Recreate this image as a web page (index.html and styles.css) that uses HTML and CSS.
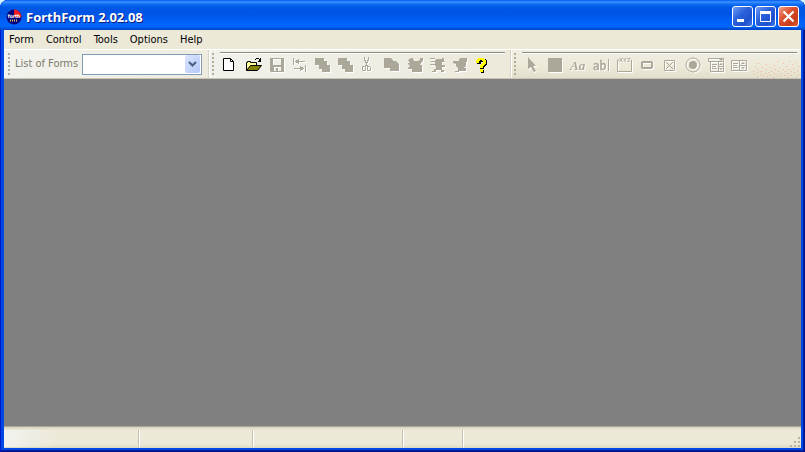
FILE: index.html
```
<!DOCTYPE html>
<html lang="en">
<head>
<meta charset="utf-8">
<title>ForthForm 2.02.08</title>
<link rel="stylesheet" href="styles.css">
</head>
<body>
<div class="window">
  <header class="titlebar">
    <svg class="logo" width="16" height="16" viewBox="0 0 16 16">
      <circle cx="8" cy="8" r="7.5" fill="#04047c"/>
      <path d="M8 8V0.5A7.5 7.5 0 0 1 15.5 8Z" fill="#f01c24"/>
      <text x="8" y="9" class="logo-text">forth</text>
      <path d="M4 11.5h8" stroke="#e8c860" stroke-width="2" stroke-dasharray="1 1"/>
    </svg>
    <h1>ForthForm 2.02.08</h1>
    <button class="caption" aria-label="Minimize"><svg width="19" height="19" viewBox="0 0 19 19"><path d="M4 12h7v3H4z" fill="#fff"/></svg></button>
    <button class="caption" aria-label="Maximize"><svg width="19" height="19" viewBox="0 0 19 19"><path fill-rule="evenodd" d="M4 4h11v11H4zM5 7v7h9V7z" fill="#fff"/></svg></button>
    <button class="caption close" aria-label="Close"><svg width="19" height="19" viewBox="0 0 19 19"><path d="M4.5 4.5l10 10M14.5 4.5l-10 10" stroke="#fff" stroke-width="2.2"/></svg></button>
  </header>
  <nav class="menu">
    <a href="#">Form</a><a href="#">Control</a><a href="#">Tools</a><a href="#">Options</a><a href="#">Help</a>
  </nav>
  <div class="rebar">
    <div class="band forms">
      <i class="grip"></i>
      <label for="forms">List of Forms</label>
      <div class="combo">
        <select id="forms"><option></option></select>
        <svg class="drop" width="15" height="18" viewBox="0 0 15 18"><path d="M4 7l3.5 3.5L11 7" fill="none" stroke="#4d6185" stroke-width="2.2"/></svg>
      </div>
    </div>
    <div class="band tools">
      <i class="grip"></i>
      <div class="buttons">
        <button aria-label="New"><svg viewBox="0 0 16 16"><path d="M.5 1.500h7l3 3v9H.5z" fill="#fff" stroke="#000"/><path d="M7.500 1.500v3h3" fill="none" stroke="#000"/></svg></button>
        <button aria-label="Open"><svg viewBox="0 0 16 16"><path d="M.5 13.500v-8h1v-1h3v1h6v3" fill="#ffff9c" stroke="#000"/><path d="M.5 13.500l4-5h11l-4 5z" fill="#848400" stroke="#000"/><path d="M9 2.500h1M10 1.500h3M13 2.500h1M14.500 1v4M12 4.500h3M13 3.500h2" fill="none" stroke="#000"/></svg></button>
        <button disabled aria-label="Save"><svg viewBox="0 0 16 16"><path fill-rule="evenodd" d="M1 1h14v14H2l-1-1zM4 2v6h8V2zM5 10v4h2v-3h2v3h3v-4z"/></svg></button>
        <button disabled aria-label="Swap"><svg viewBox="0 0 16 16"><path d="M1 1h1v7H1zM3 4h10v1H3zM4 3h2v3H4zM6 2h1v5H6zM13 8h1v7h-1zM2 11h10v1H2zM9 10h2v3H9zM8 9h1v5H8z"/></svg></button>
        <button disabled aria-label="Bring to front"><svg viewBox="0 0 16 16"><path d="M0 1h9v3h3v4h3v7H7v-3H4V8H0z"/></svg></button>
        <button disabled aria-label="Send to back"><svg viewBox="0 0 16 16"><path d="M0 1h9v3h3v4h3v7H7v-3H4V8H0z"/></svg></button>
        <button disabled aria-label="Cut"><svg viewBox="0 0 16 16"><path d="M3 0h1v4H3zM7 0h1v4H7zM4 3h1v3H4zM6 3h1v3H6zM5 5h1v4H5zM4 8h1v2H4zM6 8h1v2H6z"/><path d="M1.500 9.500h2l1 1v3h-3v-4M6.500 9.500h2l1 1v3h-3z" fill="none" stroke="#aca899"/></svg></button>
        <button disabled aria-label="Copy"><svg viewBox="0 0 16 16"><path d="M0 1h7l2 2v1h3l3 3v7H6v-3H0z"/></svg></button>
        <button disabled aria-label="Paste"><svg viewBox="0 0 16 16"><path d="M1 3l3-2h2l1 3h4l2-1V1h3v3l-2 2-1 2h2v7H5v-3H1v-1l2-2-2-2V6h2z"/></svg></button>
        <button disabled aria-label="Run form"><svg viewBox="0 0 16 16"><path d="M0 1h5v1H0zM6 2h6V1h2v3h1v1h-3v3h3v2h-3v3h2v2h-3v-2H6v2H2v-1h2v-2h2V9H5V8H0V7h5V5H1V4h4z"/></svg></button>
        <button disabled aria-label="Test form"><svg viewBox="0 0 16 16"><path d="M0 4h6V2l2-1h6v4h-1v4l-2 2h2v3H6v1H2v-1h3v-3L3 9V7L0 6z"/></svg></button>
        <button aria-label="Help"><svg viewBox="0 0 16 16"><path d="M1 7V3h1V2h2V1h4v1h2v1h1v5h-1v1H9v1H8v2H4V8h1V7h2V5H5v2z" fill="#000"/><path d="M0 6V3h1V2h1V1h6v1h1v1h1v4H9v1H8v1H7v2H4V8h1V7h1V6h1V4H6V3H4v1H3v2z" fill="#ffff00"/><path d="M5 13h3v3H5z"/><path d="M4 12h3v3H4z" fill="#ffff00"/></svg></button>
      </div>
    </div>
    <div class="band controls">
      <i class="grip"></i>
      <div class="buttons">
        <button disabled aria-label="Select"><svg viewBox="0 0 16 16"><path d="M3 0l8 9H8l3 5-2 1-3-5-3 2z"/></svg></button>
        <button disabled aria-label="Panel"><svg viewBox="0 0 16 16"><path d="M0 1h14v14H0z"/></svg></button>
        <button disabled aria-label="Label"><svg viewBox="0 0 16 16"><text x="-1" y="13" class="glyph-label">Aa</text></svg></button>
        <button disabled aria-label="Edit box"><svg viewBox="0 0 16 16"><text x="-1" y="13" class="glyph-edit">ab</text><path d="M14 2h1v12h-1z"/></svg></button>
        <button disabled aria-label="Group box"><svg viewBox="0 0 16 16"><path d="M2 3H.5v11.500h14V3H14" fill="none" stroke="#aca899"/><text x="2" y="5" class="glyph-group">XYZ</text></svg></button>
        <button disabled aria-label="Push button"><svg viewBox="0 0 16 16"><rect x="2" y="5" width="10" height="6" rx="1" fill="none" stroke="#aca899" stroke-width="2"/></svg></button>
        <button disabled aria-label="Check box"><svg viewBox="0 0 16 16"><path d="M1.500 3.500h10v10h-10zM3 5l7 7M10 5l-7 7" fill="none" stroke="#aca899"/></svg></button>
        <button disabled aria-label="Radio button"><svg viewBox="0 0 16 16"><circle cx="7" cy="8" r="7" fill="none" stroke="#aca899"/><circle cx="7" cy="8" r="4"/></svg></button>
        <button disabled aria-label="Combo box"><svg viewBox="0 0 16 16"><path d="M-.5 1.500h15v3h-15zM1.500 4.500h13v10h-13zM9.500 4.500v10M9.500 9.500h5M3 7.500h5M3 9.500h4M3 11.500h5" fill="none" stroke="#aca899"/><path d="M10 2h4l-2 2zM10 8h4l-2-2zM10 11h4l-2 2z"/></svg></button>
        <button disabled aria-label="List box"><svg viewBox="0 0 16 16"><path d="M-.5 3.500h15v10h-15zM7.500 3.500v10M7.500 8.500h7M1 6.500h5M1 8.500h4M1 10.500h5" fill="none" stroke="#aca899"/><path d="M9 7h4l-2-2zM9 10h4l-2 2z"/></svg></button>
      </div>
      <svg class="speckles" width="48" height="18" viewBox="0 0 48 18"><path fill="none" stroke="#f6b09c" d="M25 1.500h1M37 1.500h1M44 2.500h1M6 3.500h1M31 3.500h1M14 4.500h1M40 4.500h1M22 5.500h1M3 6.500h1M34 6.500h1M46 6.500h1M10 7.500h1M18 7.500h1M27 7.500h1M41 8.500h1M5 9.500h1M14 9.500h1M23 9.500h1M31 9.500h1M36 9.500h1M45 10.500h1M1 11.500h1M9 11.500h1M19 11.500h1M26 11.500h1M33 11.500h1M39 11.500h1M5 12.500h1M13 13.500h1M16 12.500h1M22 13.500h1M29 13.500h1M36 13.500h1M42 12.500h1M46 14.500h1M2 14.500h1M8 14.500h1M11 15.500h1M18 15.500h1M25 15.500h1M32 15.500h1M39 15.500h1M44 16.500h1M5 16.500h1M15 16.500h1M21 17.500h1M28 16.500h1M35 17.500h1"/></svg>
    </div>
  </div>
  <main class="workspace"></main>
  <footer class="status">
    <span></span><span></span><span></span><span></span><span></span>
    <svg class="resize" width="12" height="12" viewBox="0 0 12 12"><path d="M9 1h2v2H9zM5 5h2v2H5zM9 5h2v2H9zM1 9h2v2H1zM5 9h2v2H5zM9 9h2v2H9z" fill="#b8b4a2"/></svg>
  </footer>
</div>
</body>
</html>
```
FILE: styles.css
```
* { box-sizing: border-box; }

body {
  margin: 0;
  background: #d4f6fa;
  font: 11px/14px "DejaVu Sans Condensed", "Noto Sans", sans-serif;
  color: #000;
}

button { padding: 0; border: 0; background: none; font: inherit; }

.window {
  display: flex;
  flex-direction: column;
  min-height: 100vh;
  padding: 0 4px 4px;
  border-radius: 8px 8px 0 0;
  background: #0048e4;
  box-shadow: inset 1px 0 #0019cf, inset -1px -1px #00138c, inset -2px -2px #001ea0;
}

.titlebar {
  display: flex;
  align-items: center;
  gap: 2px;
  height: 30px;
  margin: 0 -4px;
  padding: 3px 6px 0;
  border-radius: 8px 8px 0 0;
  background: linear-gradient(#0058ee 0, #3c93ff 2px, #1070f8 4px, #0058e6 7px, #0054e3 14px, #0060f8 21px, #0066ff 26px, #0058e6 28px, #0040c0 30px);
}

.logo-text { font: bold 5px "DejaVu Sans Condensed", sans-serif; fill: #fff; text-anchor: middle; }

.titlebar h1 {
  flex: 1;
  margin: 0 0 0 2px;
  font: bold 13px/18px "Noto Sans", "Open Sans", sans-serif;
  color: #fff;
  text-shadow: 1px 1px #0a1883;
}

.caption {
  width: 21px;
  height: 21px;
  border: 1px solid #fff;
  border-radius: 3px;
  background: linear-gradient(135deg, #6f9cf4, #2c62dc 40%, #2050cc 75%, #3f7df0);
}
.caption svg { display: block; }
.close { background: linear-gradient(135deg, #f0a088, #dd5030 40%, #c83c18 75%, #e06038); }

.menu {
  display: flex;
  gap: 12px;
  height: 19px;
  padding: 3px 5px 0;
  background: #ece9d8;
}
.menu a { color: inherit; text-decoration: none; }

.rebar {
  display: flex;
  height: 30px;
  border-top: 1px solid #fff;
  border-bottom: 1px solid #c9c5b2;
  background: linear-gradient(#f0eee2, #ece9d8 60%, #e2dfcc);
}

.band {
  display: flex;
  align-items: center;
  padding-left: 4px;
  border-right: 1px solid #fff;
  box-shadow: inset -1px 0 #d8d4c2;
}
.forms { width: 206px; gap: 4px; background: linear-gradient(90deg, #f2f2ee, #eeecdf); }
.tools { width: 302px; background: linear-gradient(90deg, #f0f1eb, #edeadb); }
.controls { position: relative; flex: 1; border-right: 0; box-shadow: none; }
.tools, .controls { padding-left: 2px; }

.grip {
  flex: none;
  width: 3px;
  height: 23px;
  background: conic-gradient(from 270deg at 2px 2px, #b0ad9f 25%, #0000 0) 0 0 / 3px 4px;
}

.forms label { color: #7d7b6d; white-space: nowrap; }
.combo {
  display: flex;
  align-items: center;
  flex: 1;
  height: 21px;
  margin-right: 7px;
  padding: 0 1px;
  border: 1px solid #7f9db9;
  background: #fff;
}
.combo select { appearance: none; flex: 1; min-width: 0; height: 18px; border: 0; background: none; outline: 0; }
.drop { flex: none; border-radius: 2px; background: linear-gradient(135deg, #dae5ff, #b5c8f8); pointer-events: none; }

.buttons {
  display: flex;
  flex: 1;
  gap: 7px;
  align-self: stretch;
  margin: 2px 6px 0 5px;
  padding: 4px 0 0 3px;
  border-top: 1px solid #8f8c80;
  box-shadow: inset 0 1px #fff;
}
.controls .buttons { margin-right: 4px; }
.buttons button { flex: none; width: 16px; height: 16px; }
.buttons svg { display: block; width: 16px; height: 16px; overflow: visible; }
.buttons button:disabled svg { fill: #aca899; filter: drop-shadow(1px 1px 0 #fff); }

.glyph-label { font: italic bold 13px "Liberation Serif", serif; }
.glyph-edit { font: 12px "DejaVu Sans Condensed", sans-serif; stroke: #aca899; stroke-width: 0.5; }
.glyph-group { font: bold 6px "Liberation Sans", sans-serif; }

.speckles { position: absolute; right: 1px; bottom: 0; }

.workspace { flex: 1; background: #808080; }

.status {
  display: grid;
  grid-template-columns: 135px 114px 150px 60px 1fr 12px;
  align-items: center;
  height: 22px;
  padding-top: 2px;
  border-top: 1px solid #aca899;
  background: linear-gradient(#d6d2c0 0, #ece9d8 3px, #ece9d8 17px, #dbd8c3 21px);
}
.status span { height: 17px; border-right: 1px solid #c5c1ad; box-shadow: 1px 0 #fff; }
.status span:first-child { background: linear-gradient(90deg, #f2f2ee, #ece9d800 40%); }
.status span:nth-child(5) { border: 0; box-shadow: none; }
.resize { align-self: end; }
```
